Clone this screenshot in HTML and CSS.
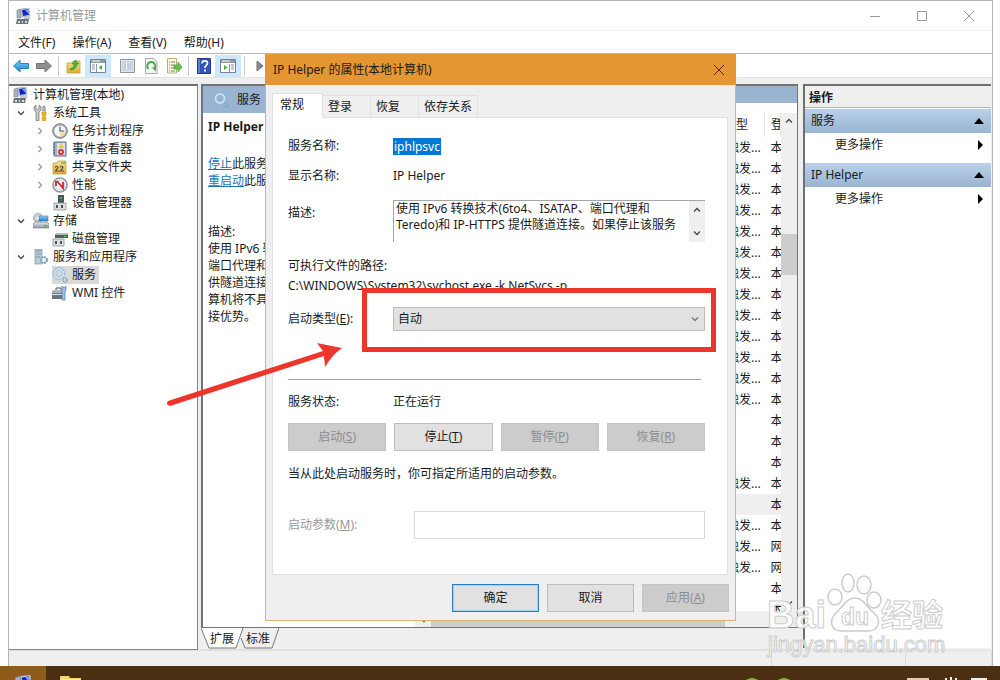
FILE: index.html
```html
<!DOCTYPE html>
<html lang="zh-CN">
  <head>
    <meta charset="utf-8">
    <title>计算机管理</title>
    <link rel="stylesheet" href="styles.css">
  </head>
  <body>
    <!-- icon shapes -->
    <svg class="defs" width="0" height="0">
      <defs>
        <linearGradient id="g-metal" x1="0" y1="0" x2="0" y2="1"><stop offset="0" stop-color="#e4e7ea"/><stop offset="1" stop-color="#9299a0"/></linearGradient>
        <linearGradient id="g-blue" x1="0" y1="0" x2="0" y2="1"><stop offset="0" stop-color="#7fd0ff"/><stop offset="1" stop-color="#1580cc"/></linearGradient>
        <linearGradient id="g-yellow" x1="0" y1="0" x2="0" y2="1"><stop offset="0" stop-color="#fbe38c"/><stop offset="1" stop-color="#e0a93a"/></linearGradient>
      </defs>
      <symbol id="i-computer" viewBox="0 0 16 16">
        <path d="M1 2l4-1v9H1z" fill="#a9b3ba" stroke="#76838c" stroke-width=".6"/>
        <path d="M5 1l8-1 1 8-8 1z" fill="#dfe5ee" stroke="#8290a4" stroke-width=".6"/>
        <path d="M6 2l6-1 1 6-6 1z" fill="#1526c4"/>
        <path d="M9 2l3-.6 1 5z" fill="#7fa0f2"/>
        <path d="M8 9l5-1 2 3H7z" fill="#c3cbd2"/>
        <path d="M1 11h12l-1 5H0z" fill="#6a747b"/>
        <path d="M2 13h2v2H2zM6 13h1v2H6zM9 13h2v2H9z" fill="#d7dfe4"/>
      </symbol>
      <symbol id="i-tools" viewBox="0 0 16 16">
        <path d="M3 0v4l1.500 1L6 4V0l2 2v3L6 7v8.500H3V7L1 5V2z" fill="#c4c8cb" stroke="#777e83" stroke-width=".8"/>
        <path d="M10 1h2l.5 5h-3z" fill="#aab1b6" stroke="#7a8288" stroke-width=".5"/>
        <path d="M9 7h4v3l-1 1 1 3-1 2H10l-1-2 1-3-1-1z" fill="#f3b51f" stroke="#c08310" stroke-width=".6"/>
      </symbol>
      <symbol id="i-clock" viewBox="0 0 16 16">
        <circle cx="8" cy="8" r="7.300" fill="#aab0b5" stroke="#777f86"/>
        <circle cx="8" cy="8" r="5.600" fill="#f5f8fb"/>
        <path d="M8 8h5.500A5.500 5.500 0 0 1 8 13.500z" fill="#f4e0ac"/>
        <path d="M8 3.500V8h4" fill="none" stroke="#525b72" stroke-width="1.200"/>
      </symbol>
      <symbol id="i-event" viewBox="0 0 16 16">
        <path d="M2 1h12v14H2z" fill="#a3b3cb" stroke="#62738f"/>
        <path d="M1 3h2M1 6h2M1 9h2M1 12h2" stroke="#4b5768"/>
        <path d="M5 2h8v12H5z" fill="#dae2ee"/>
        <path d="M9 2l3 5H7z" fill="#f6c51c"/>
        <circle cx="9" cy="11" r="3" fill="#d8372c"/>
        <path d="M8 10l2 2m0-2l-2 2" stroke="#fff" stroke-width=".8"/>
      </symbol>
      <symbol id="i-share" viewBox="0 0 16 16">
        <path d="M1 4h4l1-2h8v13H1z" fill="url(#g-yellow)" stroke="#c4973b" stroke-width=".7"/>
        <path d="M9 3l5-1v3H9z" fill="#8cc06b"/>
        <path d="M3 8.500Q5 6 6 8.500L3.500 12H7M8 8.500Q10 6 11 8.500L8.500 12H12" fill="none" stroke="#4a5146" stroke-width="1.200"/>
      </symbol>
      <symbol id="i-perf" viewBox="0 0 16 16">
        <circle cx="8" cy="8" r="7" fill="#fff" stroke="#8f969a" stroke-width="1.600"/>
        <circle cx="8" cy="8" r="5" fill="#fdf3f2" stroke="#c4cacc"/>
        <path d="M4 4v5M5 4l6 7V5" fill="none" stroke="#c8262b" stroke-width="1.800"/>
      </symbol>
      <symbol id="i-device" viewBox="0 0 16 16">
        <path d="M6 0h6v8H6z" fill="#4b5258"/><path d="M8 2h2v2H8z" fill="#4bbb54"/>
        <path d="M2 8h12v7H2z" fill="#dcdfe1" stroke="#8b9195" stroke-width=".8"/>
        <path d="M4 10h2v3H4zM9 10h2v3H9z" fill="#4a4f54"/>
      </symbol>
      <symbol id="i-storage" viewBox="0 0 16 16">
        <circle cx="5" cy="5" r="4.500" fill="#c9ced1" stroke="#8b9296" stroke-width=".7"/><circle cx="5" cy="5" r="1.500" fill="#fff"/>
        <path d="M6 3h9v5H6z" fill="url(#g-blue)" stroke="#61798c" stroke-width=".6"/>
        <path d="M2 9h12l2 2v4H0v-4z" fill="url(#g-metal)" stroke="#7c8489" stroke-width=".7"/>
        <path d="M11 12h3v1.500h-3z" fill="#49b14c"/>
      </symbol>
      <symbol id="i-disk" viewBox="0 0 16 16">
        <path d="M5 2h10l1 2v3H3V4z" fill="#555c61"/><path d="M5 2h10l1 2H3z" fill="#b4babe"/><path d="M12 5h2v1h-2z" fill="#57d45c"/>
        <path d="M1 8h11v7H1z" fill="#dfe2e4" stroke="#8b9195" stroke-width=".8"/>
        <path d="M3 10h2v3H3zM8 10h2v3H8z" fill="#4a4f54"/>
      </symbol>
      <symbol id="i-server" viewBox="0 0 16 16">
        <path d="M2 0h7v15H2z" fill="#bec9d0" stroke="#8694a0" stroke-width=".7"/>
        <path d="M3 2h5M3 5h5M3 8h4" stroke="#6e9db8"/>
        <circle cx="11" cy="11" r="3" fill="#e4f0f8" stroke="#719fbe" stroke-width="2" stroke-dasharray="2 .7"/>
      </symbol>
      <symbol id="i-gear" viewBox="0 0 16 16">
        <circle cx="7" cy="6.500" r="5" fill="none" stroke="#8fbcd8" stroke-width="2.800" stroke-dasharray="1.700 .7"/>
        <circle cx="7" cy="6.500" r="4.300" fill="none" stroke="#cfe6f4" stroke-width="1.800"/>
        <circle cx="7" cy="6.500" r="3.200" fill="none" stroke="#86b3d0" stroke-width=".6"/>
        <circle cx="13" cy="13" r="2" fill="none" stroke="#7da7c3" stroke-width="1.600" stroke-dasharray="1.200 .5"/>
      </symbol>
      <symbol id="i-wmi" viewBox="0 0 16 16">
        <path d="M4 5V3h5v2" fill="none" stroke="#4d565e"/>
        <path d="M0 6l3-1h10v9H0z" fill="#68767f"/><path d="M0 6l3-1h10v3H0z" fill="#a8b3ba"/><path d="M0 9h12v1H0z" fill="#dce3e7"/>
        <path d="M10 1l2 2 2-2v4l-1 2v8h-3V7z" fill="#9fc0e3" stroke="#4d7aa6" stroke-width=".7"/>
      </symbol>
      <symbol id="i-back" viewBox="0 0 16 16"><path d="M.5 8L7 2v3.500h8.500v5H7V14z" fill="url(#g-blue)" stroke="#2884b5"/></symbol>
      <symbol id="i-forward" viewBox="0 0 16 16"><path d="M15.500 8L9 2v3.500H.5v5H9V14z" fill="#8f8f8f" stroke="#767676"/></symbol>
      <symbol id="i-up" viewBox="0 0 16 16">
        <path d="M1 5h5l1-2h7v12H1z" fill="url(#g-yellow)" stroke="#c79a42" stroke-width=".8"/>
        <path d="M4 11c3-1 4-3 4-5H6l3.500-4L13 6h-2c0 4-3 6-7 6z" fill="#48b436" stroke="#2c8b23" stroke-width=".5"/>
      </symbol>
      <symbol id="i-panel-left" viewBox="0 0 16 16">
        <path d="M.5 1.500h15v13H.5z" fill="#fff" stroke="#78828b"/><path d="M1 2h14v3H1z" fill="#8e99a2"/><path d="M2 3h8" stroke="#fff"/>
        <path d="M6.500 6v8M2 7h3M2 9h3M2 11h3" stroke="#8c969e"/><path d="M12 7v5L8.500 9.500z" fill="#46b23a"/>
      </symbol>
      <symbol id="i-panel-right" viewBox="0 0 16 16">
        <path d="M.5 1.500h15v13H.5z" fill="#fff" stroke="#78828b"/><path d="M1 2h14v3H1z" fill="#8e99a2"/><path d="M2 3h8" stroke="#fff"/>
        <path d="M9.500 6v8M11 7h3M11 9h3M11 11h3" stroke="#8c969e"/><path d="M4 7v5l3.500-2.500z" fill="#46b23a"/>
      </symbol>
      <symbol id="i-props" viewBox="0 0 16 16">
        <path d="M.5 1.500h14v13H.5z" fill="#e3e7eb" stroke="#8f98a0"/><path d="M3 4h9v8H3z" fill="#fff" stroke="#8f98a0" stroke-width=".6"/>
        <path d="M4 6h2m1 0h4M4 8h2m1 0h4M4 10h2m1 0h4" stroke="#7a9dc6"/>
      </symbol>
      <symbol id="i-refresh" viewBox="0 0 16 16">
        <path d="M2.500.5H11L14 4v11.500H2.500z" fill="#f8f8f8" stroke="#a4a9ad"/>
        <path d="M5.500 11A4 4 0 1 1 11 11" fill="none" stroke="#3faf45" stroke-width="2"/><path d="M8.500 9.500h4.500v4z" fill="#3faf45"/>
      </symbol>
      <symbol id="i-export" viewBox="0 0 16 16">
        <path d="M1.500.5h9V15h-9z" fill="#fdf8da" stroke="#b7ac7e"/><path d="M3 4h1m1 0h4M3 7h1m1 0h3M3 10h1m1 0h3M3 13h1m1 0h4" stroke="#777"/>
        <path d="M8 7h4V4l4 5-4 5v-3H8z" fill="#65c44e" stroke="#359528" stroke-width=".6"/>
      </symbol>
      <symbol id="i-help" viewBox="0 0 16 16">
        <path d="M1.500.5h13v15h-13z" fill="#3156b7" stroke="#213c86"/><path d="M3 1v14" stroke="#8ca4e0"/>
        <path d="M6 5.500C6 2 11.500 2 11.500 5.500c0 2-2.700 2-2.700 4.500" fill="none" stroke="#fff" stroke-width="1.700"/><path d="M8 11.500h2v2H8z" fill="#fff"/>
      </symbol>
      <symbol id="i-chev" viewBox="0 0 8 8"><path d="M1 2.500l3 3 3-3" fill="none" stroke="currentColor" stroke-width="1.300"/></symbol>
      <symbol id="i-folder" viewBox="0 0 22 14"><path d="M0 1h9l1 2h11v11H0z" fill="#f7d56a"/><path d="M2 4h18v10H2z" fill="#fdeca6"/></symbol>
    </svg>

    <div class="window">
      <header class="titlebar">
        <svg class="icon"><use href="#i-computer"/></svg>
        <span class="caption">计算机管理</span>
        <button class="winbtn" aria-label="最小化"><svg width="12" height="12"><path d="M1 6.500h10"/></svg></button>
        <button class="winbtn" aria-label="最大化"><svg width="12" height="12"><path d="M1.500 1.500h9v9h-9z"/></svg></button>
        <button class="winbtn" aria-label="关闭"><svg width="12" height="12"><path d="M1 1l10 10M11 1L1 11"/></svg></button>
      </header>

      <nav class="menu">
        <button>文件(F)</button>
        <button>操作(A)</button>
        <button>查看(V)</button>
        <button>帮助(H)</button>
      </nav>

      <div class="toolbar">
        <button aria-label="后退"><svg class="icon"><use href="#i-back"/></svg></button>
        <button aria-label="前进"><svg class="icon"><use href="#i-forward"/></svg></button>
        <i class="sep"></i>
        <button aria-label="向上"><svg class="icon"><use href="#i-up"/></svg></button>
        <button class="on" aria-label="控制台树"><svg class="icon"><use href="#i-panel-left"/></svg></button>
        <button class="spaced" aria-label="属性"><svg class="icon"><use href="#i-props"/></svg></button>
        <button aria-label="刷新"><svg class="icon"><use href="#i-refresh"/></svg></button>
        <button aria-label="导出列表"><svg class="icon"><use href="#i-export"/></svg></button>
        <i class="sep"></i>
        <button aria-label="帮助"><svg class="icon"><use href="#i-help"/></svg></button>
        <button class="on" aria-label="操作窗格"><svg class="icon"><use href="#i-panel-right"/></svg></button>
        <i class="sep"></i>
        <button aria-label="启动服务"><svg width="8" height="12"><path d="M1 1l6 5-6 5z" fill="#8b8b8b" stroke="#6e6e6e"/></svg></button>
      </div>

      <main class="panes">
        <section class="tree">
          <ul>
            <li><svg class="icon"><use href="#i-computer"/></svg><span>计算机管理(本地)</span></li>
            <li class="l1"><svg class="chev"><use href="#i-chev"/></svg><svg class="icon"><use href="#i-tools"/></svg><span>系统工具</span></li>
            <li class="l2"><svg class="chev shut"><use href="#i-chev"/></svg><svg class="icon"><use href="#i-clock"/></svg><span>任务计划程序</span></li>
            <li class="l2"><svg class="chev shut"><use href="#i-chev"/></svg><svg class="icon"><use href="#i-event"/></svg><span>事件查看器</span></li>
            <li class="l2"><svg class="chev shut"><use href="#i-chev"/></svg><svg class="icon"><use href="#i-share"/></svg><span>共享文件夹</span></li>
            <li class="l2"><svg class="chev shut"><use href="#i-chev"/></svg><svg class="icon"><use href="#i-perf"/></svg><span>性能</span></li>
            <li class="l2 leaf"><svg class="icon"><use href="#i-device"/></svg><span>设备管理器</span></li>
            <li class="l1"><svg class="chev"><use href="#i-chev"/></svg><svg class="icon"><use href="#i-storage"/></svg><span>存储</span></li>
            <li class="l2 leaf"><svg class="icon"><use href="#i-disk"/></svg><span>磁盘管理</span></li>
            <li class="l1"><svg class="chev"><use href="#i-chev"/></svg><svg class="icon"><use href="#i-server"/></svg><span>服务和应用程序</span></li>
            <li class="l2 leaf"><div class="picked"><svg class="icon"><use href="#i-gear"/></svg><span>服务</span></div></li>
            <li class="l2 leaf"><svg class="icon"><use href="#i-wmi"/></svg><span>WMI 控件</span></li>
          </ul>
        </section>

        <section class="center">
          <div class="services">
            <div class="detail">
              <div class="bluebar"><svg class="icon"><use href="#i-gear"/></svg><span>服务</span></div>
              <div class="info">
                <h2>IP Helper</h2>
                <p><a href="#">停止</a>此服务<br><a href="#">重启动</a>此服务</p>
                <p class="about">描述:<br>使用 IPv6 转换技术(6to4、ISATAP、<br>端口代理和 Teredo)和 IP-HTTPS 提<br>供隧道连接。如果停止该服务，则计<br>算机将不具备这些技术提供的增强连<br>接优势。</p>
              </div>
            </div>
            <div class="list">
              <div class="bluebar thin"></div>
              <div class="rows">
                <table>
                  <thead><tr><th></th><th>启动类型</th><th>登录为</th></tr></thead>
                  <tbody>
                    <tr><td></td><td>手动(触发...</td><td>本地</td></tr>
                    <tr><td></td><td>手动(触发...</td><td>本地</td></tr>
                    <tr><td></td><td>手动(触发...</td><td>本地</td></tr>
                    <tr><td></td><td>手动(触发...</td><td>本地</td></tr>
                    <tr><td></td><td>手动(触发...</td><td>本地</td></tr>
                    <tr><td></td><td>手动(触发...</td><td>本地</td></tr>
                    <tr><td></td><td>手动(触发...</td><td>本地</td></tr>
                    <tr><td></td><td>手动(触发...</td><td>本地</td></tr>
                    <tr><td></td><td>手动(触发...</td><td>本地</td></tr>
                    <tr><td></td><td>手动(触发...</td><td>本地</td></tr>
                    <tr><td></td><td>手动(触发...</td><td>本地</td></tr>
                    <tr><td></td><td>手动(触发...</td><td>本地</td></tr>
                    <tr><td></td><td>手动(触发...</td><td>本地</td></tr>
                    <tr><td></td><td>手动</td><td>本地</td></tr>
                    <tr><td></td><td>手动</td><td>本地</td></tr>
                    <tr><td></td><td>手动</td><td>本地</td></tr>
                    <tr><td></td><td>手动(触发...</td><td>本地</td></tr>
                    <tr class="current"><td></td><td>自动</td><td>本地</td></tr>
                    <tr><td></td><td>手动(触发...</td><td>本地</td></tr>
                    <tr><td></td><td>手动(触发...</td><td>网络</td></tr>
                    <tr><td></td><td>手动(触发...</td><td>网络</td></tr>
                    <tr><td></td><td>手动</td><td>本地</td></tr>
                    <tr><td></td><td>手动</td><td>本地</td></tr>
                  </tbody>
                </table>
                <div class="vscroll"><svg class="chev flip"><use href="#i-chev"/></svg><i class="thumb"></i><svg class="chev"><use href="#i-chev"/></svg></div>
              </div>
              <div class="hscroll"><svg class="chev left"><use href="#i-chev"/></svg><i class="thumb"></i></div>
            </div>
          </div>
          <div class="viewtabs">
            <svg width="78" height="21"><path d="M38 .5h40L71 20H44L38 8z" fill="#efefef"/><path d="M0 0h42l-7 20H8z" fill="#fff"/><path d="M0 0l8 20h27l7-20M40 10l4 10h27L78 0" fill="none" stroke="#777"/></svg>
            <button>扩展</button>
            <button>标准</button>
          </div>
        </section>

        <aside class="actions">
          <h3>操作</h3>
          <button class="group">服务<svg width="10" height="6"><path d="M0 6l5-6 5 6z"/></svg></button>
          <button class="more">更多操作<svg width="5" height="10"><path d="M0 0l5 5-5 5z"/></svg></button>
          <button class="group">IP Helper<svg width="10" height="6"><path d="M0 6l5-6 5 6z"/></svg></button>
          <button class="more">更多操作<svg width="5" height="10"><path d="M0 0l5 5-5 5z"/></svg></button>
        </aside>
      </main>
      <footer class="status"><i></i><i></i><i></i></footer>
    </div>

    <div class="taskbar">
      <div class="task active"><svg width="20" height="20"><use href="#i-computer"/></svg></div>
      <div class="task"><svg width="22" height="14"><use href="#i-folder"/></svg></div>
      <svg class="tray" width="260" height="14">
        <path d="M6 14q6-4 12 0zM38 14q6-4 12 0z" fill="#8cae4b"/>
        <path d="M167 12h22v2h-22z" fill="#d9cfa8"/><path d="M206 12v2M211 11v3M216 12v2" stroke="#eee" stroke-width="2"/><path d="M231 12h16v2h-16z" fill="#eee"/>
      </svg>
    </div>

    <div class="dialog" role="dialog" aria-labelledby="dlg-title">
      <div class="dlg-title">
        <span id="dlg-title">IP Helper 的属性(本地计算机)</span>
        <button aria-label="关闭"><svg width="12" height="12"><path d="M1 1l10 10M11 1L1 11"/></svg></button>
      </div>
      <div class="tabs">
        <button class="active">常规</button>
        <button>登录</button>
        <button>恢复</button>
        <button>依存关系</button>
      </div>
      <form class="sheet">
        <div class="row"><label for="svc">服务名称:</label><input id="svc" class="svc" value="iphlpsvc" readonly></div>
        <div class="row"><span>显示名称:</span><span>IP Helper</span></div>
        <div class="row desc">
          <label for="desc">描述:</label>
          <div class="descbox">
            <textarea id="desc" readonly>使用 IPv6 转换技术(6to4、ISATAP、端口代理和 Teredo)和 IP-HTTPS 提供隧道连接。如果停止该服务</textarea>
            <div class="scroll"><svg class="chev flip"><use href="#i-chev"/></svg><svg class="chev"><use href="#i-chev"/></svg></div>
          </div>
        </div>
        <div class="path">
          <p>可执行文件的路径:</p>
          <p>C:\WINDOWS\System32\svchost.exe -k NetSvcs -p</p>
        </div>
        <div class="row start">
          <label for="type">启动类型(<u>E</u>):</label>
          <div class="combo"><select id="type"><option>自动</option></select><svg class="chev"><use href="#i-chev"/></svg></div>
        </div>
        <hr>
        <div class="row state"><span>服务状态:</span><span>正在运行</span></div>
        <div class="btns">
          <button type="button" disabled>启动(<u>S</u>)</button>
          <button type="button">停止(<u>T</u>)</button>
          <button type="button" disabled>暂停(<u>P</u>)</button>
          <button type="button" disabled>恢复(<u>R</u>)</button>
        </div>
        <p class="note">当从此处启动服务时，你可指定所适用的启动参数。</p>
        <div class="row param"><label for="param">启动参数(<u>M</u>):</label><input id="param" disabled></div>
      </form>
      <div class="dlg-foot">
        <button class="default">确定</button>
        <button>取消</button>
        <button disabled>应用(<u>A</u>)</button>
      </div>
    </div>

    <!-- red marker and arrow -->
    <div class="marker"></div>
    <svg class="arrow" width="176" height="68" viewBox="0 0 176 68">
      <path d="M2 61L157 11 151 3q14 3 25 5-10 7-17 19l-1-11L4 66q-5-1-2-5z" fill="#ee352c"/>
    </svg>

    <svg class="watermark" width="184" height="90" viewBox="0 0 184 90">
      <g fill="#fff" fill-opacity=".85" stroke="#ccc" stroke-width="1.500">
        <ellipse cx="69" cy="26" rx="7" ry="8"/><ellipse cx="82" cy="12" rx="6" ry="9"/><ellipse cx="98" cy="14" rx="7" ry="9"/><ellipse cx="108" cy="29" rx="7" ry="8"/>
        <path d="M89 27c9 0 12 10 19 15 8 7 5 18-6 18H76c-12 0-13-11-6-18 7-6 10-15 19-15z"/>
      </g>
      <g class="wm-text">
        <text x="1" y="57" font-size="38">Bai</text>
        <text x="75" y="54" font-size="23">du</text>
        <text x="115" y="55" font-size="31">经验</text>
        <text x="2" y="81" font-size="22" class="url">jingyan.baidu.com</text>
      </g>
    </svg>
  </body>
</html>
```

FILE: styles.css
```css
* { box-sizing: border-box; }
body { margin: 0; min-height: 100vh; display: flex; flex-direction: column; position: relative; overflow: hidden; color: #1a1a1a; background: #fff; font: 12px/18px "Noto Sans", "Noto Sans CJK SC", sans-serif; }
button, input, select, textarea { font: inherit; color: inherit; margin: 0; padding: 0; border: 0; background: none; border-radius: 0; }
ul, p, h2, h3 { margin: 0; padding: 0; list-style: none; }
svg { display: block; flex: none; }
.defs { position: absolute; }
.icon { width: 16px; height: 16px; }
.chev { width: 8px; height: 8px; color: #444; }
.flip { transform: rotate(180deg); }
.left { transform: rotate(90deg); }

/* main window */
.window { flex: 1; margin: 0 7px 0 8px; display: flex; flex-direction: column; border: 1px solid #b5b5b5; border-bottom: 0; background: #efefef; }
.titlebar { height: 30px; display: flex; align-items: center; padding-left: 7px; background: #fff; border-bottom: 1px solid #eee; color: #999; }
.caption { flex: 1; padding-left: 4px; }
.winbtn { width: 47px; display: flex; justify-content: center; }
.winbtn path { fill: none; stroke: #999; }
.menu { height: 23px; display: flex; gap: 17px; padding: 1px 0 0 9px; background: #fff; border-bottom: 1px solid #b9b9b9; }
.toolbar { height: 24px; display: flex; align-items: center; background: #fff; border-bottom: 1px solid #e2e2e2; }
.toolbar button { width: 23px; height: 22px; display: flex; align-items: center; justify-content: center; }
.toolbar .on { width: 26px; background: #cce8ff; }
.toolbar .spaced { margin-left: 5px; }
.sep { width: 1px; height: 20px; margin: 0 3px; background: #c9c9c9; }

.panes { flex: 1; display: grid; grid-template-columns: 189px 1fr 188px; column-gap: 3px; padding: 6px 1px 0 0; }
.tree { background: #fff; border: 1px solid #828790; border-left: 0; border-top: 2px solid #707070; padding: 0 4px; }
.tree li { height: 18px; display: flex; align-items: center; }
.tree span { padding-left: 4px; white-space: nowrap; }
.tree .l1 { padding-left: 4px; }
.tree .l2 { padding-left: 23px; }
.tree .leaf { padding-left: 39px; }
.tree .chev { margin-right: 8px; }
.shut { transform: rotate(-90deg); color: #999; }
.picked { display: flex; align-items: center; background: #d9d9d9; padding-right: 3px; }

/* services list */
.center { display: flex; flex-direction: column; min-width: 0; margin-right: 2px; }
.services { flex: 1; display: flex; background: #fff; border: 2px solid #747474; border-width: 2px 1px 1px 2px; }
.bluebar { height: 27px; display: flex; align-items: center; gap: 8px; padding-left: 10px; background: #99b4d1; }
.thin { height: 17px; }
.detail { width: 212px; white-space: nowrap; }
.info { padding: 5px 0 0 5px; line-height: 17px; }
.info h2 { font-size: 12px; line-height: 18px; margin-bottom: 19px; }
.info a { color: #1a73b8; }
.about { margin-top: 34px; }
.list { flex: 1; min-width: 0; display: flex; flex-direction: column; }
.rows { flex: 1 1 0px; min-height: 0; display: flex; padding-top: 10px; overflow: hidden; }
table { flex: 1; min-width: 0; table-layout: fixed; border-collapse: collapse; width: 0; align-self: start; }
th, td { height: 21px; padding: 0 0 0 6px; text-align: left; font-weight: normal; white-space: nowrap; overflow: hidden; }
th { height: 24px; border-right: 1px solid #e5e5e5; }
th:nth-child(2) { width: 71px; }
th:nth-child(3) { width: 16px; }
.current { background: #efefef; }
.vscroll { width: 16px; display: flex; flex-direction: column; align-items: center; padding: 4px 0; background: #efefef; }
.vscroll .thumb { width: 16px; height: 41px; margin: 109px 0 auto; background: #cdcdcd; }
.hscroll { height: 16px; display: flex; align-items: center; gap: 4px; padding-left: 4px; background: #efefef; }
.hscroll .thumb { width: 294px; height: 16px; background: #cdcdcd; }
.viewtabs { height: 22px; position: relative; display: flex; gap: 12px; padding-left: 9px; border-bottom: 1px solid #e0e0e0; }
.viewtabs svg { position: absolute; left: 0; top: 0; }
.viewtabs button { position: relative; }

/* actions pane */
.actions { display: flex; flex-direction: column; margin-bottom: 2px; background: #fff; border: 2px solid #707070; border-right: 0; border-bottom: 0; }
.actions h3 { height: 22px; font-size: 12px; line-height: 23px; padding-left: 4px; margin-bottom: 1px; background: #efefef; border-bottom: 1px solid #b5b5b5; }
.actions button { display: flex; align-items: center; justify-content: space-between; text-align: left; }
.group { height: 24px; padding: 0 7px 0 6px; background: linear-gradient(#b9d1ea, #99b4d1); }
.more { height: 24px; margin-bottom: 6px; padding: 0 8px 0 30px; }
.status { height: 16px; display: flex; border-top: 1px solid #e0e0e0; }
.status i { width: 134px; border-right: 1px solid #dcdcdc; }
.status i:first-child { flex: 1; }
.status i:last-child { width: 86px; }

.taskbar { flex: none; height: 14px; display: flex; overflow: hidden; background: #4b2f12; }
.task { width: 46px; padding: 9px 0 0 14px; }
.task.active { background: #8f5b1d; }
.tray { margin-left: auto; }

/* properties dialog */
.dialog { position: absolute; left: 265px; top: 54px; width: 471px; display: flex; flex-direction: column; background: #efefef; border: 1px solid #dcb47a; }
.dlg-title { height: 31px; margin: -1px -1px 0; display: flex; align-items: center; justify-content: space-between; padding: 0 11px 0 8px; background: #e49632; }
.dlg-title path { stroke: #4a3010; }
.tabs { display: flex; align-items: flex-end; height: 32px; padding-left: 6px; }
.tabs button { height: 22px; padding: 0 18px 0 5px; border: 1px solid #e0e0e0; border-width: 1px 1px 0 0; text-align: left; }
.tabs button:last-child { padding-right: 5px; }
.tabs .active { height: 25px; width: 51px; margin-bottom: -1px; padding: 0 0 3px 7px; background: #fff; border-left-width: 1px; position: relative; }
.sheet { margin: 0 7px 0 6px; padding: 13px 22px 35px 15px; background: #fff; border: 1px solid #e0e0e0; }
.row { display: grid; grid-template-columns: 105px 1fr; align-items: center; min-height: 30px; }
.svc { width: 48px; height: 17px; padding-left: 1px; line-height: 17px; color: #fff; background: #0078d7; }
.desc { margin-top: 9px; min-height: 42px; align-items: start; }
.desc label { line-height: 26px; }
.descbox { display: flex; height: 42px; border: 1px solid #a5a5a5; border-width: 1px 0 0 1px; }
.descbox textarea { flex: 1; height: 34px; padding: 0 2px; line-height: 16px; resize: none; overflow: hidden; }
.scroll { width: 16px; display: flex; flex-direction: column; align-items: center; justify-content: space-between; padding: 5px 0; background: #efefef; }
.path { margin-top: 14px; line-height: 20px; }
.start { margin-top: 11px; min-height: 24px; }
.combo { position: relative; }
.combo select { display: block; width: 100%; height: 24px; padding-left: 4px; appearance: none; background: #e1e1e1; border: 1px solid #bcbcbc; }
.combo .chev { position: absolute; right: 6px; top: 8px; color: #777; }
hr { margin: 48px 4px 0 0; border: 0; border-top: 1px solid #a0a0a0; }
.state { margin-top: 12px; min-height: 20px; }
.btns { display: grid; grid-template-columns: repeat(4, 1fr); gap: 8px; margin-top: 11px; }
.btns button, .dlg-foot button { height: 28px; background: #e1e1e1; border: 1px solid #bcbcbc; }
.btns button:disabled, .dlg-foot button:disabled { background: #ccc; border-color: #c4c4c4; color: #8c8c8c; }
.note { margin-top: 13px; line-height: 20px; }
.param { grid-template-columns: 126px 1fr; margin-top: 27px; min-height: 28px; color: #999; }
.param input { height: 28px; width: 100%; background: #fff; border: 1px solid #d9d9d9; }
.dlg-foot { display: flex; justify-content: flex-end; gap: 8px; padding: 9px 6px 8px; }
.dlg-foot button { width: 87px; }
.dlg-foot .default { border: 1px solid #2c7fc4; box-shadow: inset 0 0 0 1px #a9cdec; }

/* drawn over the screen */
.marker { position: absolute; left: 362px; top: 288px; width: 354px; height: 64px; border: 5px solid #ee352c; }
.arrow { position: absolute; left: 166px; top: 340px; }
.watermark { position: absolute; left: 766px; top: 571px; }
.wm-text { font-family: "Liberation Sans", "Noto Sans CJK SC", sans-serif; font-weight: bold; fill: #fff; fill-opacity: .85; stroke: #ccc; stroke-width: 1px; }
.wm-text .url { font-weight: normal; }
```
